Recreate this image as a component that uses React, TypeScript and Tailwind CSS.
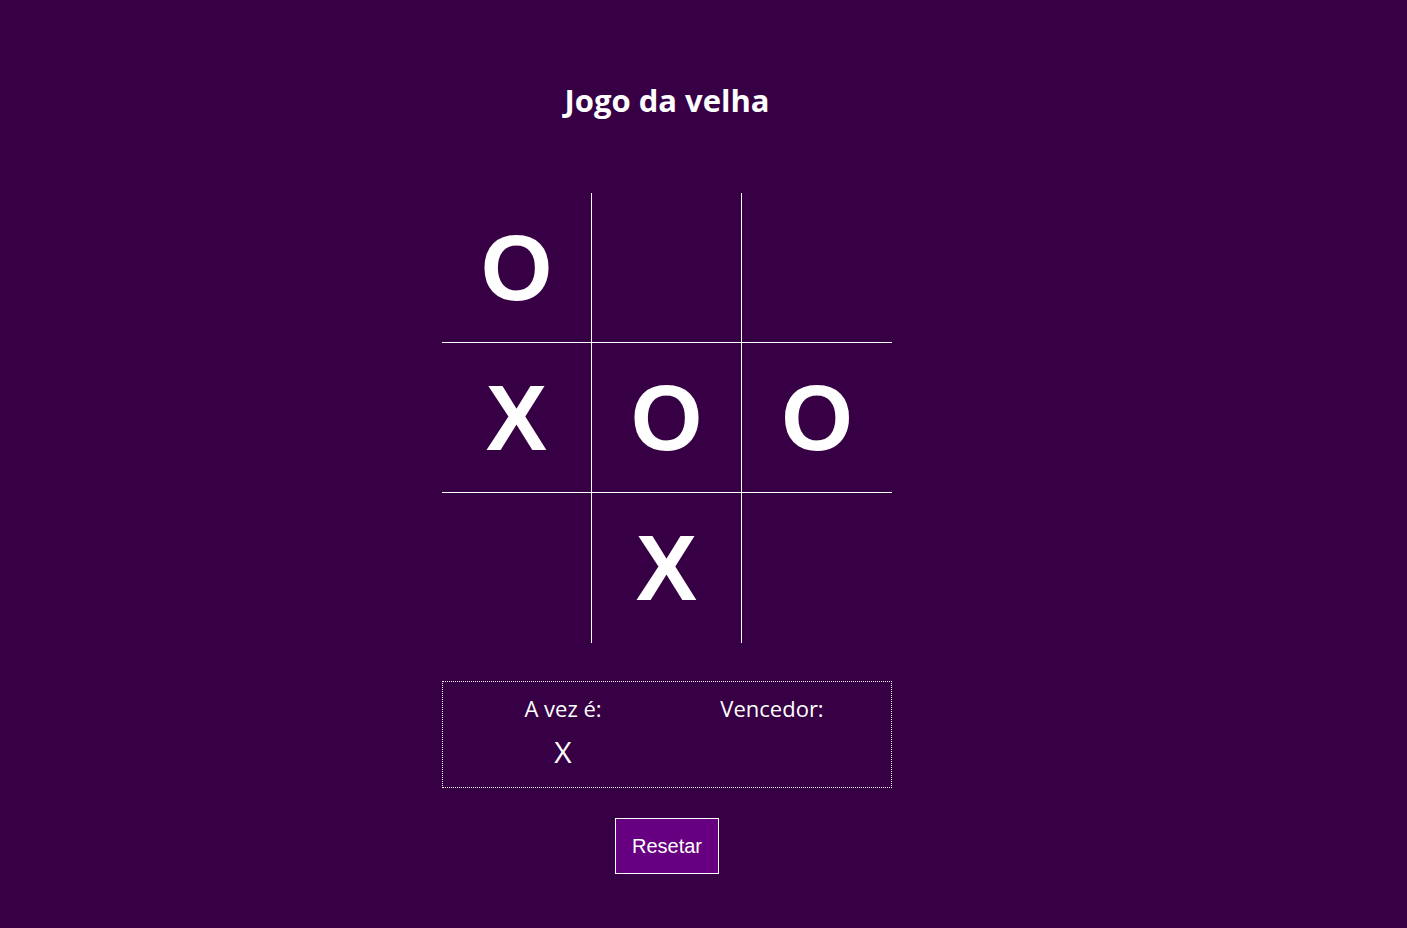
import { useState } from 'react'

type Cell = 'X' | 'O' | ''

const initial: Cell[] = ['O', '', '', 'X', 'O', 'O', '', 'X', '']

export default function App() {
  const [board, setBoard] = useState<Cell[]>(initial)
  const [turn, setTurn] = useState<'X' | 'O'>('X')

  function play(i: number) {
    if (board[i]) return
    const next = [...board]
    next[i] = turn
    setBoard(next)
    setTurn(turn === 'X' ? 'O' : 'X')
  }

  function reset() {
    setBoard(Array(9).fill('') as Cell[])
    setTurn('X')
  }

  return (
    <div className="min-h-screen bg-[#370045] text-white pr-[73px] flex flex-col items-center font-['Open_Sans',sans-serif]">
      <h1 className="mt-[80px] text-[31px] font-bold leading-[40px]">Jogo da velha</h1>

      {/* BOARD */}
      <div className="mt-[73px] grid grid-cols-[150px_150px_150px] grid-rows-[150px_150px_150px]">
        {board.map((c, i) => (
          <button
            key={i}
            onClick={() => play(i)}
            className={`flex items-center justify-center border-white font-['Liberation_Sans',sans-serif] font-bold text-[92px] leading-none ${
              i % 3 !== 2 ? 'border-r' : ''
            } ${i < 6 ? 'border-b' : ''}`}
          >
            {c}
          </button>
        ))}
      </div>

      {/* INFO */}
      <div className="mt-[38px] w-[450px] h-[107px] border border-dotted border-white grid grid-cols-[240px_178px] pt-[11px]">
        <div className="flex flex-col items-center">
          <span className="text-[22px] leading-[30px]">A vez é:</span>
          <span className="mt-[9px] text-[30px] leading-[40px]">{turn}</span>
        </div>
        <div className="flex flex-col items-center">
          <span className="text-[22px] leading-[30px]">Vencedor:</span>
        </div>
      </div>

      <button
        onClick={reset}
        className="mt-[30px] w-[104px] h-[56px] bg-[#660080] border border-white font-['Liberation_Sans',sans-serif] text-[20px]"
      >
        Resetar
      </button>
    </div>
  )
}
